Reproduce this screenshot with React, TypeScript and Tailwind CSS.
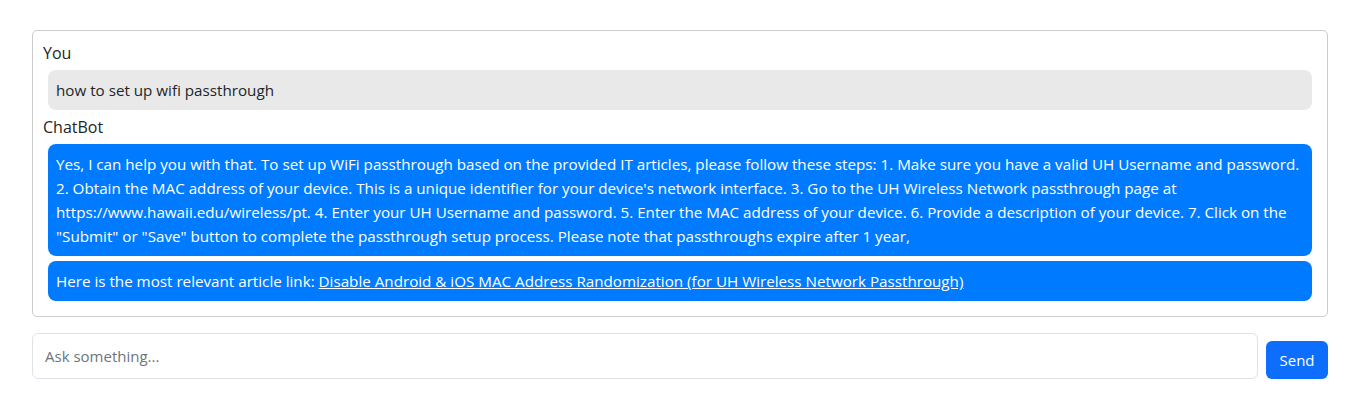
import { useState } from 'react'

type Message = { sender: 'You' | 'ChatBot'; lines: string[] }

const messages: Message[] = [
  { sender: 'You', lines: ['how to set up wifi passthrough'] },
  {
    sender: 'ChatBot',
    lines: [
      'Yes, I can help you with that. To set up WiFi passthrough based on the provided IT articles, please follow these steps: 1. Make sure you have a valid UH Username and password.',
      "2. Obtain the MAC address of your device. This is a unique identifier for your device's network interface. 3. Go to the UH Wireless Network passthrough page at",
      'https://www.hawaii.edu/wireless/pt. 4. Enter your UH Username and password. 5. Enter the MAC address of your device. 6. Provide a description of your device. 7. Click on the',
      '"Submit" or "Save" button to complete the passthrough setup process. Please note that passthroughs expire after 1 year,',
    ],
  },
]

export default function App() {
  const [input, setInput] = useState('')

  return (
    <div
      className="bg-white min-h-screen pt-[30px] pl-[32px] text-[16px] leading-[24px] text-[#212529]"
      style={{ fontFamily: '"Open Sans", "Noto Sans", sans-serif' }}
    >
      <div className="w-[1296px] border border-[#cccccc] rounded-[5px] p-[10px]">
        {messages.map((m, i) => (
          <div key={i}>
            <div>{m.sender}</div>
            <div
              className={
                m.sender === 'You'
                  ? 'm-[5px] px-2 py-2 rounded-lg bg-[#e9e9e9] text-[15.2px]'
                  : 'm-[5px] px-2 py-2 rounded-lg bg-[#007bff] text-white text-[15.2px] whitespace-nowrap'
              }
            >
              {m.lines.map((l, j) => (
                <div key={j}>{l}</div>
              ))}
            </div>
          </div>
        ))}
        <div className="m-[5px] px-2 py-2 rounded-lg bg-[#007bff] text-white text-[15.2px]">
          Here is the most relevant article link:{' '}
          <a href="#" className="underline text-white">
            Disable Android &amp; iOS MAC Address Randomization (for UH Wireless Network Passthrough)
          </a>
        </div>
      </div>

      <div className="w-[1296px] mt-[16px] flex items-end gap-2">
        <input
          value={input}
          onChange={e => setInput(e.target.value)}
          placeholder="Ask something..."
          className="flex-1 h-[46px] px-3 border border-[#dee2e6] rounded-md text-[15px] outline-none placeholder:text-[#6c757d]"
        />
        <button className="h-[38px] w-[62px] rounded-md bg-[#0d6efd] text-white text-[15px]">Send</button>
      </div>
    </div>
  )
}
